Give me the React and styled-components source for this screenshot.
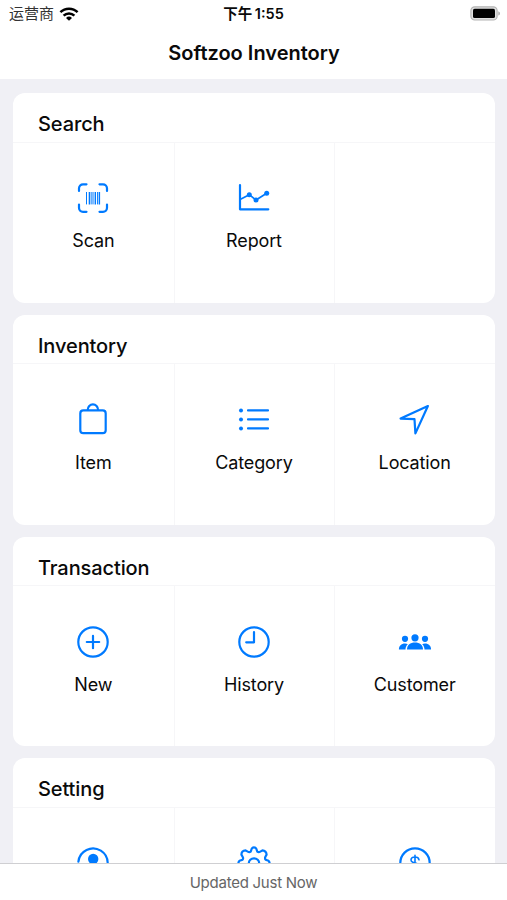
import React from "react";
import styled, { createGlobalStyle } from "styled-components";

const COLORS = {
  primary: "#007aff",
  background: "#f0f0f5",
  divider: "#f6f6f8",
};

const App = () => {
  return (
    <Screen>
      <GlobalStyle />
      <StatusBar>
        <Carrier>
          运营商
          <WifiIcon />
        </Carrier>
        <Clock>
          下午 <Digits>1:55</Digits>
        </Clock>
        <Power>
          <BatteryIcon />
        </Power>
      </StatusBar>
      <TitleBar>
        <Title>Softzoo Inventory</Title>
      </TitleBar>
      <Content>
        {SECTIONS.map(({ title, items }) => (
          <Card key={title}>
            <CardTitle>{title}</CardTitle>
            <Tiles>
              {items.map(({ label, icon }, index) => (
                <Tile key={label || index}>
                  {icon && <Icon viewBox="0 0 36 36">{icon}</Icon>}
                  <Label>{label}</Label>
                </Tile>
              ))}
            </Tiles>
          </Card>
        ))}
      </Content>
      <Footer>Updated Just Now</Footer>
    </Screen>
  );
};

const WifiIcon = () => (
  <svg width="20" height="14" viewBox="0 0 20 14">
    <g fill="none" stroke="#000" strokeWidth="2.5">
      <path d="M1.4 5.2a12.4 12.4 0 0 1 17.2 0" />
      <path d="M4.6 8.6a7.8 7.8 0 0 1 10.8 0" />
    </g>
    <path d="M10 13.8 7 10.9a4.4 4.4 0 0 1 6 0z" />
  </svg>
);

const BatteryIcon = () => (
  <svg width="31" height="15" viewBox="0 0 31 15">
    <rect x="0.9" y="0.8" width="26.2" height="13.2" rx="3.8" fill="#e0e0e0" stroke="#b4b4b4" strokeWidth="1.2" />
    <rect x="3" y="2.8" width="22" height="9.2" rx="1.6" />
    <path d="M28.3 5.2c2.2.8 2.2 3.6 0 4.4z" fill="#aaa" />
  </svg>
);

const scanIcon = (
  <>
    <path d="M4 11V8.300a4 4 0 0 1 4-4h3.500M24.500 4.300H28a4 4 0 0 1 4 4V11M32 24.500v3.300a4 4 0 0 1-4 4h-3.500M11.500 31.800H8a4 4 0 0 1-4-4v-3.300" />
    <path d="M11.500 12v12.400M18 12v12.400M22.600 12v12.400" strokeWidth="1" strokeLinecap="butt" />
    <path d="M14.400 12v12.400M20.300 12v12.400M24.400 12v12.400" strokeWidth="1.400" strokeLinecap="butt" />
    <path d="M16.200 12v12.400" strokeWidth=".9" strokeLinecap="butt" />
  </>
);

const reportIcon = (
  <>
    <path d="M4 5v24.300h28.300" />
    <path d="M4 19.500l9.300-4.800L20 20l10.700-6.700" strokeWidth="1.700" />
    <g fill="currentColor" stroke="none">
      <circle cx="13.300" cy="14.700" r="2.500" />
      <circle cx="20" cy="20" r="2.500" />
      <circle cx="30.700" cy="13.300" r="2.500" />
    </g>
  </>
);

const itemIcon = (
  <>
    <rect x="5.300" y="8.400" width="25.400" height="22.800" rx="3" />
    <path d="M12.700 8a5.200 5.600 0 0 1 10.400 0" />
  </>
);

const categoryIcon = (
  <>
    <path d="M12 8.400h20M12 17.400h20M12 26.400h20" />
    <g fill="currentColor" stroke="none">
      <circle cx="5" cy="8.400" r="2" />
      <circle cx="5" cy="17.400" r="2" />
      <circle cx="5" cy="26.400" r="2" />
    </g>
  </>
);

const locationIcon = (
  <path d="M30.900 4 3.600 16.600l13.900.6.900 14.200z" />
);

const newIcon = (
  <>
    <circle cx="18" cy="18" r="14.700" />
    <path d="M18 11.800v12.400M11.800 18h12.400" />
  </>
);

const historyIcon = (
  <>
    <circle cx="18" cy="18" r="14.700" />
    <path d="M18 8v10.300H10.200" />
  </>
);

const customerIcon = (
  <g fill="currentColor" stroke="none">
    <circle cx="8" cy="14.800" r="3.100" />
    <circle cx="28" cy="14.800" r="3.100" />
    <path d="M1.900 25.600c0-3.600 2.400-6 6.100-6 1.200 0 2 .2 2.800.6-1.500 1.400-2.300 3.200-2.300 5.400z" />
    <path d="M34.100 25.600c0-3.600-2.400-6-6.100-6-1.200 0-2 .2-2.800.6 1.500 1.400 2.300 3.200 2.300 5.400z" />
    <circle cx="18" cy="13.800" r="3.600" />
    <path d="M10 25.600c0-4.400 3.300-7 8-7s8 2.600 8 7z" />
  </g>
);

const profileIcon = (
  <>
    <path d="M3.400 16.600a14.700 14.700 0 1 1 0 3" />
    <circle cx="18.200" cy="14" r="5.200" fill="currentColor" stroke="none" />
    <path d="M8 28c1-5 5-7.500 10-7.500s9 2.500 10 7.500z" fill="currentColor" stroke="none" />
  </>
);

const gearIcon = (
  <>
    <path d="M15.800 3.500Q18 1.400 20.200 3.500L21.300 6.600Q22.600 7.600 24.300 6.600L26.400 5.400Q30.200 5.600 30.600 9.600L29.400 11.700Q28.600 13.400 29.600 14.700L32.500 15.800Q34.600 18 32.500 20.200L29.400 21.300Q28.400 22.600 29.400 24.300L30.600 26.400Q30.400 30.200 26.400 30.600L24.300 29.400Q22.600 28.600 21.300 29.600L20.200 32.500Q18 34.600 15.800 32.500L14.700 29.400Q13.400 28.400 11.700 29.400L9.600 30.600Q5.800 30.400 5.400 26.400L6.600 24.300Q7.400 22.600 6.400 21.300L3.500 20.200Q1.400 18 3.500 15.800L6.600 14.700Q7.600 13.400 6.600 11.700L5.400 9.600Q5.600 5.600 9.600 5.400L11.700 6.600Q13.400 7.600 14.700 6.600Z" />
    <circle cx="18" cy="18.500" r="5.200" />
  </>
);

const currencyIcon = (
  <>
    <circle cx="18" cy="18" r="14.700" />
    <path
      d="M22 14.800c-.3-1.800-1.800-2.800-4-2.800-2.300 0-4 1.100-4 3 0 4.200 8.200 1.900 8.200 6.200 0 2-1.800 3.200-4.200 3.200-2.500 0-4.200-1.200-4.400-3.200M18 10.300v16.100"
      strokeWidth="1.600"
    />
  </>
);

const SECTIONS = [
  {
    title: "Search",
    items: [
      { label: "Scan", icon: scanIcon },
      { label: "Report", icon: reportIcon },
      { label: "" },
    ],
  },
  {
    title: "Inventory",
    items: [
      { label: "Item", icon: itemIcon },
      { label: "Category", icon: categoryIcon },
      { label: "Location", icon: locationIcon },
    ],
  },
  {
    title: "Transaction",
    items: [
      { label: "New", icon: newIcon },
      { label: "History", icon: historyIcon },
      { label: "Customer", icon: customerIcon },
    ],
  },
  {
    title: "Setting",
    items: [
      { label: "", icon: profileIcon },
      { label: "", icon: gearIcon },
      { label: "", icon: currencyIcon },
    ],
  },
];

const GlobalStyle = createGlobalStyle`
  body {
    margin: 0;
    background: ${COLORS.background};
    font-family: Inter, "Noto Sans CJK SC", sans-serif;
    color: #0a0a0a;
  }
`;
const Screen = styled.div`
  display: flex;
  flex-direction: column;
  height: 900px;
  overflow: hidden;
`;
const StatusBar = styled.header`
  display: grid;
  grid-template-columns: 1fr auto 1fr;
  align-items: center;
  flex: none;
  height: 27px;
  padding: 0 6px 0 9px;
  background: #fff;
  font-size: 15px;
  line-height: 27px;
`;
const Carrier = styled.div`
  display: flex;
  align-items: center;
  gap: 5px;
  color: #333;
`;
const Clock = styled.div`
  margin-left: -3px;
  font-size: 14.5px;
  font-weight: 600;
`;
const Digits = styled.span`
  margin-left: -1px;
`;
const Power = styled.div`
  display: flex;
  justify-content: flex-end;
`;
const TitleBar = styled.div`
  flex: none;
  height: 52px;
  background: #fff;
  text-align: center;
`;
const Title = styled.h1`
  margin: 0;
  padding-left: 1px;
  font-size: 20px;
  font-weight: 600;
  line-height: 52px;
`;
const Content = styled.main`
  display: flex;
  flex-direction: column;
  gap: 12px;
  flex: 1;
  min-height: 0;
  padding: 14.300px 12px 0 13px;
  overflow: hidden;
`;
const Card = styled.section`
  flex: none;
  height: 209.700px;
  border-radius: 12px;
  background: #fff;
  overflow: hidden;
`;
const CardTitle = styled.h2`
  box-sizing: border-box;
  height: 49.500px;
  margin: 0;
  padding: 7px 25px 0;
  border-bottom: 1px solid ${COLORS.divider};
  font-size: 20px;
  font-weight: 500;
  letter-spacing: -0.1px;
  line-height: 48px;
`;
const Tiles = styled.div`
  display: grid;
  grid-template-columns: repeat(3, 1fr);
  height: 161px;
`;
const Tile = styled.div`
  display: flex;
  flex-direction: column;
  align-items: center;
  padding-top: 37.500px;

  & + & {
    box-shadow: inset 1px 0 ${COLORS.divider};
  }
`;
const Icon = styled.svg`
  width: 36px;
  height: 36px;
  color: ${COLORS.primary};
  fill: none;
  stroke: currentColor;
  stroke-width: 2.2;
  stroke-linecap: round;
  stroke-linejoin: round;
`;
const Label = styled.span`
  margin-top: 12px;
  font-size: 18px;
  letter-spacing: -0.14px;
  line-height: 26px;
`;
const Footer = styled.footer`
  flex: none;
  box-sizing: border-box;
  height: 37px;
  border-top: 1px solid #cfcfd2;
  background: #fff;
  color: #666;
  font-size: 15px;
  letter-spacing: -0.25px;
  line-height: 37px;
  text-align: center;
`;

export default App;
